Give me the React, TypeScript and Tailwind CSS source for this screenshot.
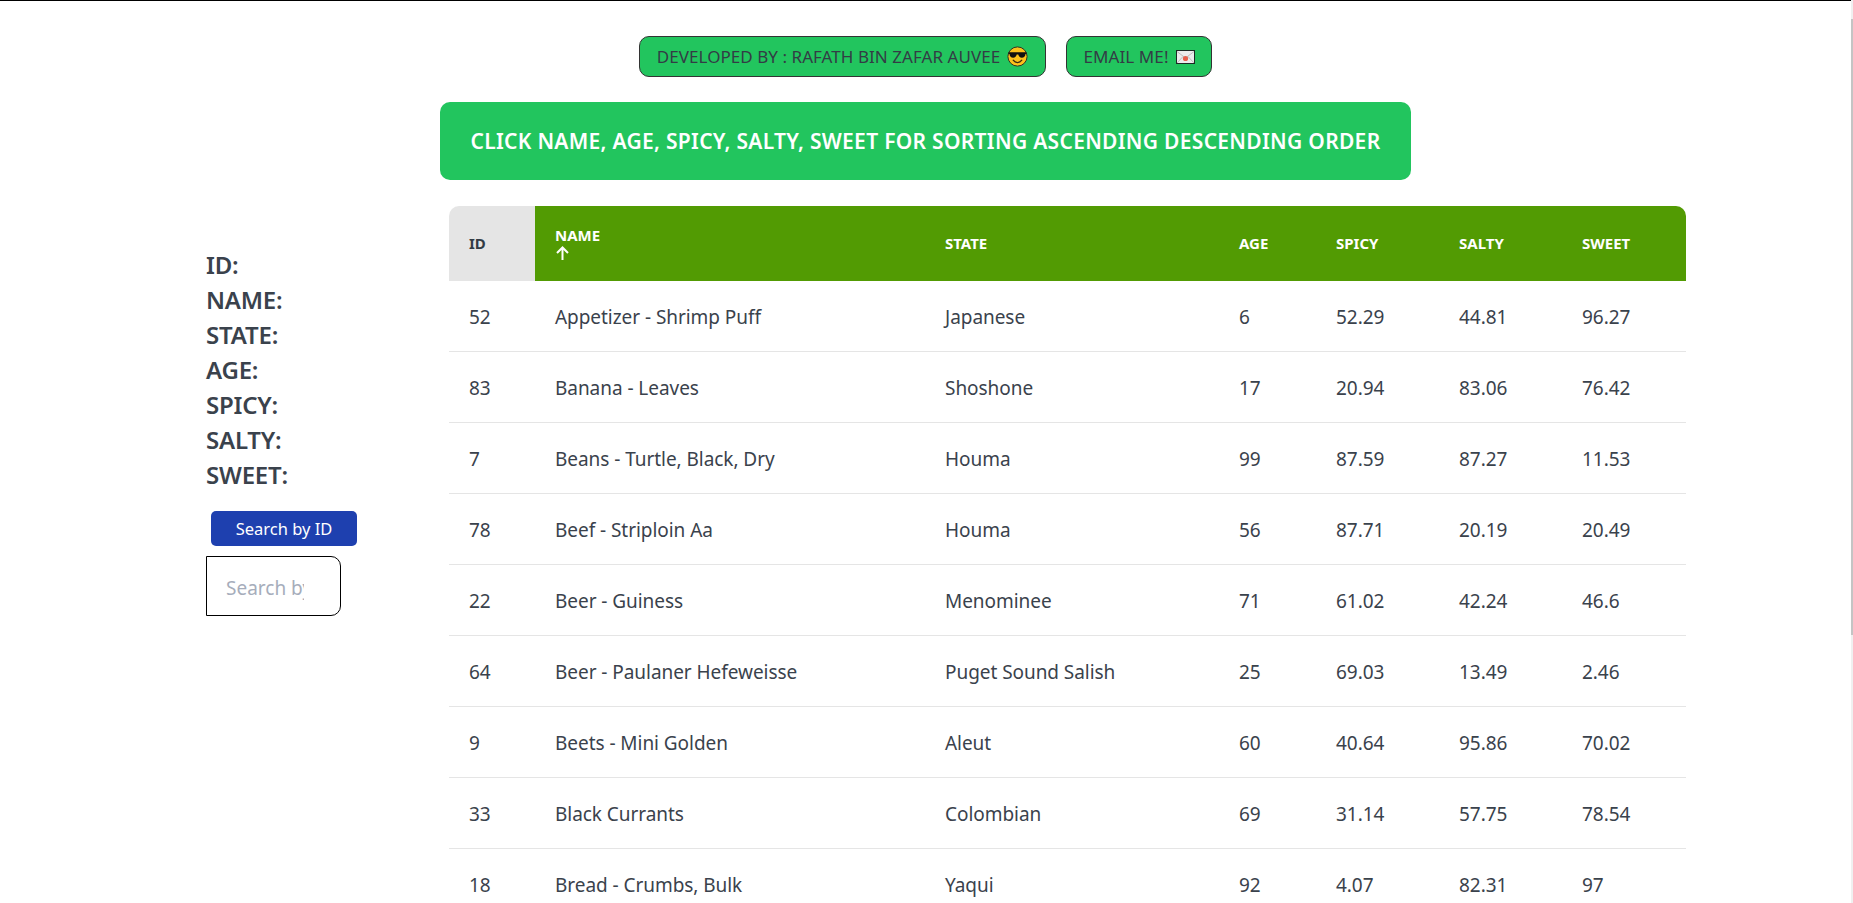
import React from "react";

const rows = [
  [52, "Appetizer - Shrimp Puff", "Japanese", 6, 52.29, 44.81, 96.27],
  [83, "Banana - Leaves", "Shoshone", 17, 20.94, 83.06, 76.42],
  [7, "Beans - Turtle, Black, Dry", "Houma", 99, 87.59, 87.27, 11.53],
  [78, "Beef - Striploin Aa", "Houma", 56, 87.71, 20.19, 20.49],
  [22, "Beer - Guiness", "Menominee", 71, 61.02, 42.24, 46.6],
  [64, "Beer - Paulaner Hefeweisse", "Puget Sound Salish", 25, 69.03, 13.49, 2.46],
  [9, "Beets - Mini Golden", "Aleut", 60, 40.64, 95.86, 70.02],
  [33, "Black Currants", "Colombian", 69, 31.14, 57.75, 78.54],
  [18, "Bread - Crumbs, Bulk", "Yaqui", 92, 4.07, 82.31, 97],
];

const labels = ["ID:", "NAME:", "STATE:", "AGE:", "SPICY:", "SALTY:", "SWEET:"];

const CoolEmoji = () => (
  <svg width="21" height="21" viewBox="0 0 21 21" className="ml-[7px] shrink-0">
    <circle cx="10.5" cy="10.5" r="9.6" fill="#fcc21b" stroke="#3a3320" strokeWidth="1" />
    <path d="M1.5 6.2h18v1.6l-1 .3c-.3 2.6-1.6 3.7-3.6 3.7-2 0-3.2-1.3-3.6-3.2h-1.6c-.4 1.9-1.6 3.2-3.6 3.2-2 0-3.3-1.1-3.6-3.7l-1-.3z" fill="#111" />
    <path d="M6.2 14.2c1.2 1.7 2.7 2.4 4.3 2.4s3.1-.7 4.3-2.4" fill="none" stroke="#3a2a10" strokeWidth="1.2" strokeLinecap="round" />
  </svg>
);

const MailEmoji = () => (
  <svg width="19" height="14" viewBox="0 0 19 14" className="ml-[7px] shrink-0">
    <rect x="0.5" y="0.5" width="18" height="13" fill="#ececec" stroke="#1c2a24" />
    <path d="M1 1.5l8.5 6.5 8.5-6.5M1 13l6-6.5M18 13l-6-6.5" fill="none" stroke="#bdbdbd" strokeWidth="1" />
    <circle cx="9.5" cy="8.5" r="2.6" fill="#e8604c" />
  </svg>
);

const SortArrow = () => (
  <svg width="13" height="14" viewBox="0 0 13 14" className="mt-[2px] ml-[1px] block" fill="none" stroke="currentColor" strokeWidth="2">
    <path d="M6.5 14V1.5M1 7l5.5-5.5L12 7" />
  </svg>
);

const App = () => {
  return (
    <div className="relative h-[903px] overflow-hidden bg-white font-['Noto_Sans',sans-serif] text-[#3a424c]">
      <div className="mr-[2px] h-px bg-black" />
      <div className="flex flex-col items-center pr-[2px] pt-[35px]">
        <div className="flex gap-5">
          <button className="flex h-[41px] w-[407px] items-center justify-center rounded-[10px] border border-[#333] bg-[#22c55e] text-[17px] tracking-[0.05px] text-[#333c45]">
            DEVELOPED BY : RAFATH BIN ZAFAR AUVEE
            <CoolEmoji />
          </button>
          <button className="flex h-[41px] w-[146px] items-center justify-center rounded-[10px] border border-[#333] bg-[#22c55e] text-[17px] tracking-[0.1px] text-[#333c45]">
            EMAIL ME!
            <MailEmoji />
          </button>
        </div>
        <div className="mt-[25px] flex h-[78px] w-[971px] items-center justify-center rounded-[10px] bg-[#22c55e] pt-[2px] text-[21px] font-semibold tracking-[0.3px] text-white">
          CLICK NAME, AGE, SPICY, SALTY, SWEET FOR SORTING ASCENDING DESCENDING ORDER
        </div>
      </div>

      <div className="mt-[26px] flex pl-[206px]">
        <div className="w-[243px] shrink-0 pt-[41px]">
          {labels.map((label) => (
            <div key={label} className="text-[24px] leading-[35px] font-semibold tracking-[-0.2px]">
              {label}
            </div>
          ))}
          <button className="mt-[19px] ml-[5px] block h-[35px] w-[146px] rounded-[5px] bg-[#1e40af] pt-[2px] text-[16.5px] text-white">
            Search by ID
          </button>
          <input
            placeholder="Search by ID"
            className="mt-[10px] block h-[60px] w-[135px] rounded-r-[10px] border border-black bg-white pt-[3px] pr-[36px] pl-[19px] text-[19px] outline-none placeholder:text-[#a6adbb]"
          />
        </div>

        <table className="w-[1237px] shrink-0 table-fixed border-separate border-spacing-0 text-left">
          <colgroup>
            <col className="w-[86px]" />
            <col className="w-[390px]" />
            <col className="w-[294px]" />
            <col className="w-[97px]" />
            <col className="w-[123px]" />
            <col className="w-[123px]" />
            <col className="w-[124px]" />
          </colgroup>
          <thead>
            <tr className="h-[75px] text-[15px] leading-[17px] font-bold text-white">
              <th className="rounded-tl-[10px] bg-[#e5e5e5] pl-5 text-[#333c45]">ID</th>
              <th className="bg-[#529b03] pl-5">
                NAME
                <SortArrow />
              </th>
              <th className="bg-[#529b03] pl-5">STATE</th>
              <th className="bg-[#529b03] pl-5">AGE</th>
              <th className="bg-[#529b03] pl-5">SPICY</th>
              <th className="bg-[#529b03] pl-5">SALTY</th>
              <th className="rounded-tr-[10px] bg-[#529b03] pl-5">SWEET</th>
            </tr>
          </thead>
          <tbody>
            {rows.map((row) => (
              <tr key={row[0]} className="h-[71px] text-[19px] tracking-[-0.05px]">
                {row.map((cell, i) => (
                  <td key={i} className="border-b border-[#e5e5e5] pt-[3px] pl-5">
                    {cell}
                  </td>
                ))}
              </tr>
            ))}
          </tbody>
        </table>
      </div>

      {/* thin browser scrollbar on the right edge */}
      <div className="absolute top-0 right-0 h-full w-[2px] bg-[#f0f0f0]">
        <div className="mt-[19px] h-[616px] bg-[#c4c4c4]" />
      </div>
    </div>
  );
};

export default App;
